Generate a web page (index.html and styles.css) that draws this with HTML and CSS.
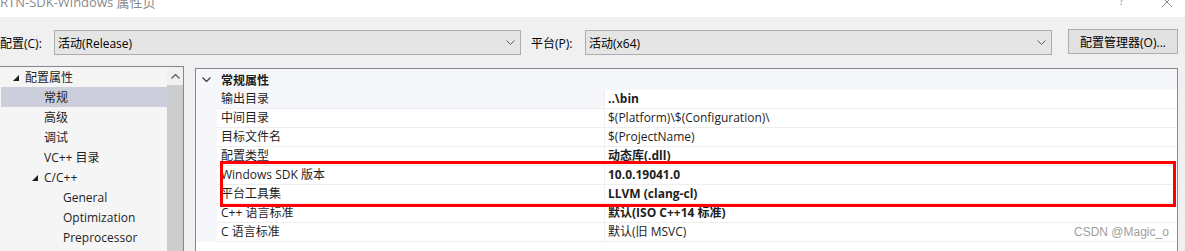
FILE: index.html
```html
<!DOCTYPE html>
<html lang="zh-CN">
<head>
    <meta charset="UTF-8">
    <meta name="viewport" content="width=device-width, initial-scale=1.0">
    <title>RTN-SDK-Windows 属性页</title>
    <link rel="stylesheet" href="styles.css">
</head>
<body>

    <div id="window">
        <div class="titlebar">
            <span class="title">RTN-SDK-Windows 属性页</span>
            <span class="help">?</span>
            <svg class="close" width="12" height="12" viewBox="0 0 12 12">
                <path d="M1 1 L11 11 M11 1 L1 11" stroke="#8a8a8a" stroke-width="1" fill="none"/>
            </svg>
        </div>

        <div class="config-row">
            <span class="field-label">配置(C):</span>
            <div class="combo">
                <span>活动(Release)</span>
                <svg class="chevron" width="9" height="5" viewBox="0 0 9 5"><path d="M0.5 0.5 L4.5 4.5 L8.5 0.5" stroke="#606060" fill="none"/></svg>
            </div>
            <span class="field-label platform-label">平台(P):</span>
            <div class="combo">
                <span>活动(x64)</span>
                <svg class="chevron" width="9" height="5" viewBox="0 0 9 5"><path d="M0.5 0.5 L4.5 4.5 L8.5 0.5" stroke="#606060" fill="none"/></svg>
            </div>
            <button class="manager-btn">配置管理器(O)...</button>
        </div>

        <div class="main">
            <div class="tree">
                <ul class="tree-list">
                    <li class="lvl0"><span class="expander"><svg width="6" height="6" viewBox="0 0 6 6"><path d="M6 0 L6 6 L0 6 Z" fill="#1e1e1e"/></svg></span>配置属性</li>
                    <li class="lvl1 selected">常规</li>
                    <li class="lvl1">高级</li>
                    <li class="lvl1">调试</li>
                    <li class="lvl1">VC++ 目录</li>
                    <li class="lvl1b"><span class="expander"><svg width="6" height="6" viewBox="0 0 6 6"><path d="M6 0 L6 6 L0 6 Z" fill="#1e1e1e"/></svg></span>C/C++</li>
                    <li class="lvl2">General</li>
                    <li class="lvl2">Optimization</li>
                    <li class="lvl2">Preprocessor</li>
                </ul>
                <div class="scrollbar">
                    <div class="scroll-up">
                        <svg width="9" height="5" viewBox="0 0 9 5"><path d="M0.5 4.5 L4.5 0.5 L8.5 4.5" stroke="#606060" stroke-width="1.4" fill="none"/></svg>
                    </div>
                    <div class="scroll-thumb"></div>
                </div>
            </div>

            <div class="grid">
                <div class="grid-header">
                    <svg class="group-chevron" width="9" height="5" viewBox="0 0 9 5"><path d="M0.5 0.5 L4.5 4.5 L8.5 0.5" stroke="#444" stroke-width="1.4" fill="none"/></svg>
                    <span>常规属性</span>
                </div>
                <div class="row">
                    <div class="gutter"></div>
                    <div class="name current">输出目录</div>
                    <div class="value bold">..\bin</div>
                </div>
                <div class="row">
                    <div class="gutter"></div>
                    <div class="name">中间目录</div>
                    <div class="value">$(Platform)\$(Configuration)\</div>
                </div>
                <div class="row">
                    <div class="gutter"></div>
                    <div class="name">目标文件名</div>
                    <div class="value">$(ProjectName)</div>
                </div>
                <div class="row">
                    <div class="gutter"></div>
                    <div class="name">配置类型</div>
                    <div class="value bold">动态库(.dll)</div>
                </div>
                <div class="row">
                    <div class="gutter"></div>
                    <div class="name">Windows SDK 版本</div>
                    <div class="value bold">10.0.19041.0</div>
                </div>
                <div class="row">
                    <div class="gutter"></div>
                    <div class="name">平台工具集</div>
                    <div class="value bold">LLVM (clang-cl)</div>
                </div>
                <div class="row">
                    <div class="gutter"></div>
                    <div class="name">C++ 语言标准</div>
                    <div class="value bold">默认(ISO C++14 标准)</div>
                </div>
                <div class="row">
                    <div class="gutter"></div>
                    <div class="name">C 语言标准</div>
                    <div class="value">默认(旧 MSVC)</div>
                </div>
            </div>
        </div>

        <div class="highlight"></div>
        <div class="watermark">CSDN @Magic_o</div>
    </div>

</body>
</html>
```

FILE: styles.css
```css
body {
    margin: 0px;
    font-family: 'Open Sans', 'Noto Sans CJK SC', sans-serif;
    font-size: 12px;
    color: #1e1e1e;
    background-color: #f0f0f0;
    overflow: hidden;
}
#window {
    position: relative;
    width: 1185px;
    height: 251px;
    overflow: hidden;
}
.titlebar {
    height: 17px;
    background-color: white;
    position: relative;
    overflow: hidden;
}
.title {
    display: block;
    margin-top: -6px;
    line-height: 16px;
    font-size: 13px;
    color: #8a8a8a;
}
.help {
    position: absolute;
    left: 1119px;
    top: -7px;
    line-height: 16px;
    color: #9a9a9a;
}
.close {
    position: absolute;
    left: 1161px;
    top: -4px;
}
.config-row {
    display: flex;
    align-items: center;
    margin-top: 13px;
    height: 25px;
}
.field-label {
    width: 54px;
    flex: none;
    color: #000;
}
.platform-label {
    margin-left: 10px;
}
.combo {
    width: 467px;
    height: 25px;
    box-sizing: border-box;
    border: 1px solid #adadad;
    background-color: #e5e5e5;
    display: flex;
    align-items: center;
    justify-content: space-between;
    padding: 0 5px 0 3px;
    color: #000;
    flex: none;
}
.manager-btn {
    margin-left: 16px;
    margin-top: -2px;
    width: 110px;
    height: 25px;
    box-sizing: border-box;
    border: 1px solid #adadad;
    background-color: #e1e1e1;
    font-family: inherit;
    font-size: 12px;
    color: #000;
    padding: 0;
}
.main {
    display: flex;
    align-items: flex-start;
    margin-top: 11px;
}
.tree {
    width: 184px;
    height: 200px;
    box-sizing: border-box;
    border-top: 1px solid #828790;
    border-right: 1px solid #828790;
    background-color: #f5f5f5;
    display: flex;
    flex: none;
}
.tree-list {
    list-style: none;
    margin: 0;
    padding: 0 0 0 1px;
    width: 166px;
}
.tree-list li {
    height: 20px;
    line-height: 21px;
    display: flex;
    align-items: center;
    white-space: nowrap;
}
.expander {
    width: 12px;
    display: flex;
    align-items: center;
    margin-top: 2px;
}
.lvl0 {
    padding-left: 12px;
}
.lvl1 {
    padding-left: 43px;
}
.lvl1b {
    padding-left: 31px;
}
.lvl2 {
    padding-left: 62px;
}
.selected {
    background-color: #cccedb;
}
.scrollbar {
    width: 16px;
    display: flex;
    flex-direction: column;
}
.scroll-up {
    height: 18px;
    display: flex;
    align-items: center;
    justify-content: center;
    background-color: #f0f0f0;
}
.scroll-thumb {
    flex: 1;
    background-color: #cdcdcd;
}
.grid {
    margin-left: 11px;
    margin-top: 2px;
    width: 983px;
    height: 200px;
    box-sizing: border-box;
    border: 1px solid #828790;
    background-color: white;
    flex: none;
}
.grid-header {
    height: 21px;
    background-color: #f5f7fa;
    display: flex;
    align-items: center;
    font-weight: bold;
    color: #1e1e1e;
}
.group-chevron {
    margin-left: 6px;
    margin-right: 10px;
}
.row {
    display: flex;
    height: 19px;
}
.gutter {
    width: 21px;
    background-color: #f5f7fa;
    flex: none;
}
.name {
    width: 388px;
    box-sizing: border-box;
    padding-left: 4px;
    border-right: 1px solid #eeeeee;
    border-bottom: 1px solid #eeeeee;
    line-height: 18px;
    white-space: nowrap;
    flex: none;
}
.name.current {
    background-color: #f5f7fa;
}
.value {
    flex: 1;
    padding-left: 3px;
    border-bottom: 1px solid #eeeeee;
    line-height: 18px;
    white-space: nowrap;
}
.bold {
    font-weight: bold;
}
.highlight {
    position: absolute;
    left: 220px;
    top: 161px;
    width: 956px;
    height: 46px;
    box-sizing: border-box;
    border: 3px solid #ff0000;
}
.watermark {
    position: absolute;
    left: 1074px;
    top: 225px;
    font-family: 'Liberation Sans', sans-serif;
    font-size: 12px;
    color: #a0a0a0;
}
```
